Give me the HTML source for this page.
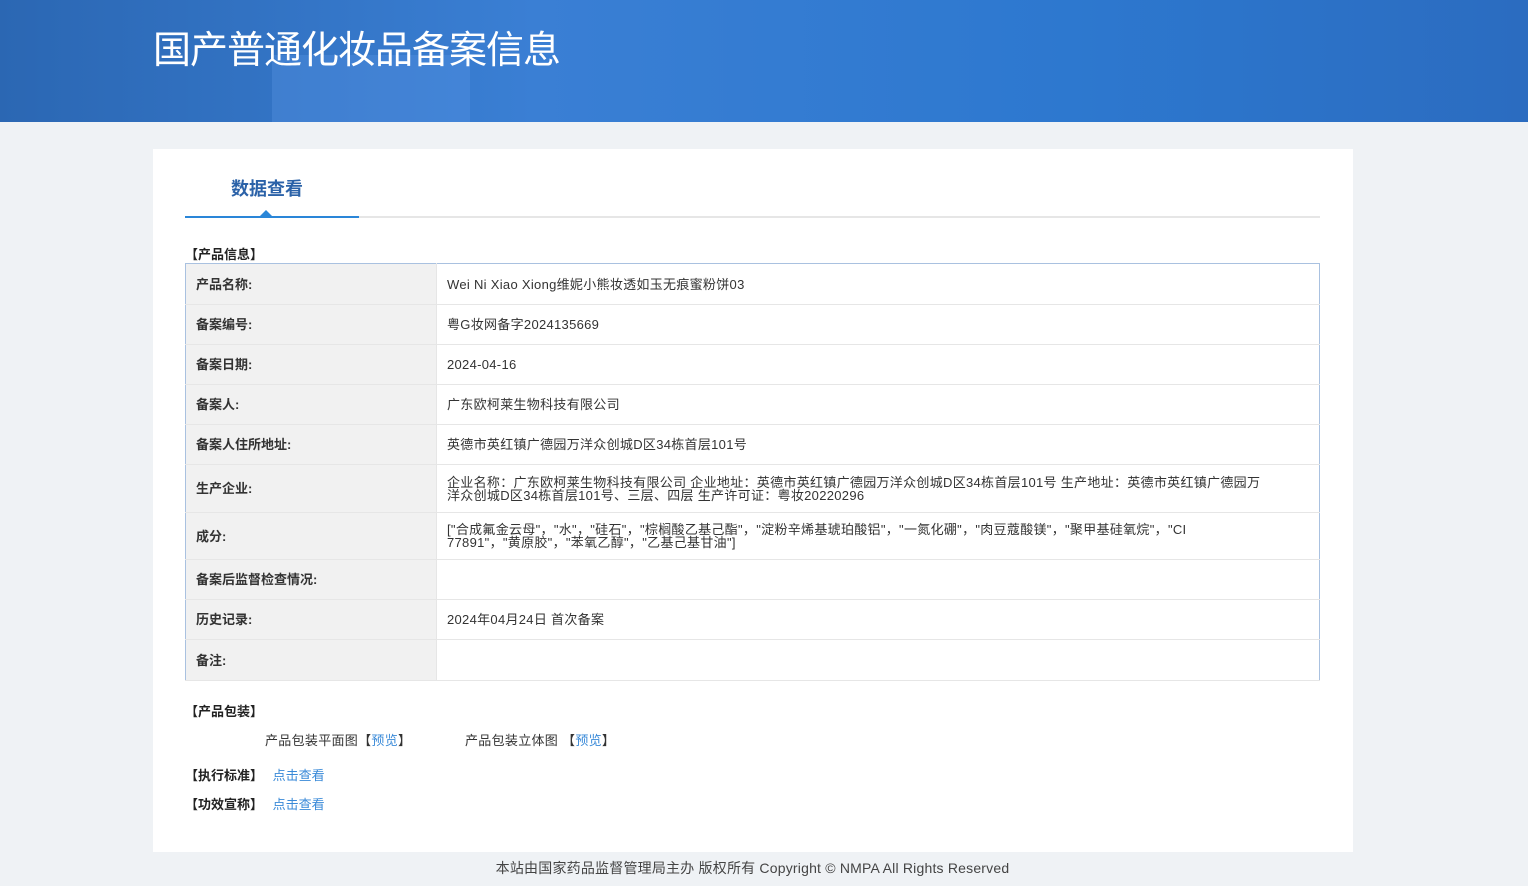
<!DOCTYPE html>
<html><head><meta charset="utf-8"><style>
*{margin:0;padding:0;box-sizing:border-box}
body{width:1528px;height:886px;background:#eff2f5;font-family:"Liberation Sans","Noto Sans CJK SC",sans-serif;font-size:13px;color:#333;position:relative;overflow:hidden}
.hd{position:absolute;left:0;top:0;width:1528px;height:122px;background:linear-gradient(90deg,#2b67b3 0%,#3a7fd4 35%,#2d78cf 70%,#2b6cc0 100%);overflow:hidden}
.hd .b{position:absolute;left:272px;top:55px;width:198px;height:67px;background:rgba(90,150,230,.35)}
.hd h1{position:absolute;left:153px;top:23px;font-size:38px;font-weight:normal;color:#fff;letter-spacing:-1px;font-family:"Noto Sans CJK SC",sans-serif;line-height:48px}
.card{position:absolute;left:153px;top:149px;width:1200px;height:703px;background:#fff}
.tab{position:absolute;left:78px;top:26px;font-size:18px;font-weight:bold;color:#2b62a8}
.ul{position:absolute;left:32px;top:67px;width:1135px;height:2px;background:#e6e6e6}
.ul2{position:absolute;left:32px;top:67px;width:174px;height:2px;background:#2a86d8}
.tri{position:absolute;left:107px;top:61px;border:6px solid transparent;border-bottom-color:#2a86d8;border-top:0}
.sec{position:absolute;font-weight:bold;color:#222;font-size:13px}
table{position:absolute;left:32px;top:114px;width:1135px;border-collapse:collapse;border:1px solid #a9c1e0}
td{border-bottom:1px solid #e6e6e6;padding:0 10px;vertical-align:middle;line-height:13px;letter-spacing:0.3px}
td.l{width:251px;background:#f1f1f1;font-weight:bold;color:#333;border-right:1px solid #e6e6e6;letter-spacing:0}
a{color:#3a8ad8;text-decoration:none}
.ft{position:absolute;top:858px;left:0;width:1505px;text-align:center;font-size:14px;color:#444;letter-spacing:0.2px}
</style></head><body>
<div class="hd"><div class="b"></div><h1>国产普通化妆品备案信息</h1></div>
<div class="card">
<div class="tab">数据查看</div>
<div class="ul"></div><div class="ul2"></div><div class="tri"></div>
<div class="sec" style="left:32px;top:95px">【产品信息】</div>
<table>
<tr style="height:41px"><td class="l">产品名称:</td><td>Wei Ni Xiao Xiong维妮小熊妆透如玉无痕蜜粉饼03</td></tr>
<tr style="height:40px"><td class="l">备案编号:</td><td>粤G妆网备字2024135669</td></tr>
<tr style="height:40px"><td class="l">备案日期:</td><td>2024-04-16</td></tr>
<tr style="height:40px"><td class="l">备案人:</td><td>广东欧柯莱生物科技有限公司</td></tr>
<tr style="height:40px"><td class="l">备案人住所地址:</td><td>英德市英红镇广德园万洋众创城D区34栋首层101号</td></tr>
<tr style="height:48px"><td class="l">生产企业:</td><td>企业名称：广东欧柯莱生物科技有限公司 企业地址：英德市英红镇广德园万洋众创城D区34栋首层101号 生产地址：英德市英红镇广德园万<br>洋众创城D区34栋首层101号、三层、四层 生产许可证：粤妆20220296</td></tr>
<tr style="height:47px"><td class="l">成分:</td><td>["合成氟金云母"，"水"，"硅石"，"棕榈酸乙基己酯"，"淀粉辛烯基琥珀酸铝"，"一氮化硼"，"肉豆蔻酸镁"，"聚甲基硅氧烷"，"CI<br>77891"，"黄原胶"，"苯氧乙醇"，"乙基己基甘油"]</td></tr>
<tr style="height:40px"><td class="l">备案后监督检查情况:</td><td></td></tr>
<tr style="height:40px"><td class="l">历史记录:</td><td>2024年04月24日 首次备案</td></tr>
<tr style="height:41px"><td class="l">备注:</td><td></td></tr>
</table>
<div class="sec" style="left:32px;top:552px">【产品包装】</div>
<div style="position:absolute;left:112px;top:581px;letter-spacing:0.3px">产品包装平面图【<a>预览</a>】</div>
<div style="position:absolute;left:312px;top:581px;letter-spacing:0.3px">产品包装立体图 【<a>预览</a>】</div>
<div class="sec" style="left:32px;top:616px">【执行标准】 <a style="font-weight:normal;margin-left:6px">点击查看</a></div>
<div class="sec" style="left:32px;top:645px">【功效宣称】 <a style="font-weight:normal;margin-left:6px">点击查看</a></div>
</div>
<div class="ft">本站由国家药品监督管理局主办 版权所有 Copyright © NMPA All Rights Reserved</div>
</body></html>
